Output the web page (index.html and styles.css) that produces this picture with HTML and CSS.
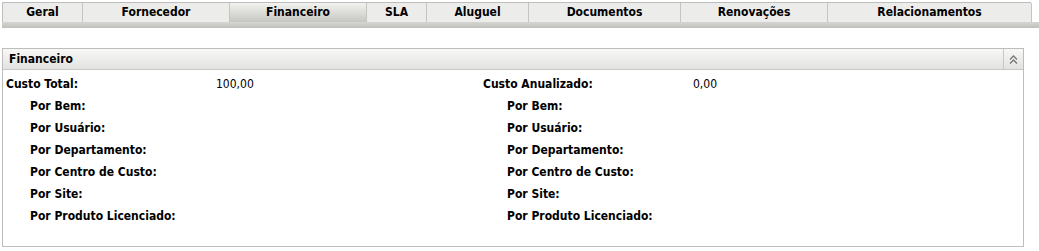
FILE: index.html
```html
<!DOCTYPE html>
<html lang="pt">
<head>
    <meta charset="UTF-8">
    <title>Financeiro</title>
    <link rel="stylesheet" href="styles.css">
</head>
<body>

<!-- Abas -->
<div class="tabs">
    <div class="tab">Geral</div>
    <div class="tab">Fornecedor</div>
    <div class="tab active">Financeiro</div>
    <div class="tab">SLA</div>
    <div class="tab">Aluguel</div>
    <div class="tab">Documentos</div>
    <div class="tab">Renovações</div>
    <div class="tab">Relacionamentos</div>
</div>
<div class="tab-band"></div>

<!-- Painel Financeiro -->
<div class="panel">
    <div class="panel-header">
        <span class="panel-title">Financeiro</span>
        <span class="collapse">
            <svg width="11" height="11" viewBox="0 0 11 11">
                <path d="M2 5.5 L5.5 2 L9 5.5 M2 9.5 L5.5 6 L9 9.5" fill="none" stroke="#777" stroke-width="1.3"/>
            </svg>
        </span>
    </div>
    <div class="panel-body">
        <div class="col">
            <div class="row"><span class="label">Custo Total:</span><span class="value">100,00</span></div>
            <div class="row sub"><span class="label">Por Bem:</span></div>
            <div class="row sub"><span class="label">Por Usuário:</span></div>
            <div class="row sub"><span class="label">Por Departamento:</span></div>
            <div class="row sub"><span class="label">Por Centro de Custo:</span></div>
            <div class="row sub"><span class="label">Por Site:</span></div>
            <div class="row sub"><span class="label">Por Produto Licenciado:</span></div>
        </div>
        <div class="col">
            <div class="row"><span class="label">Custo Anualizado:</span><span class="value">0,00</span></div>
            <div class="row sub"><span class="label">Por Bem:</span></div>
            <div class="row sub"><span class="label">Por Usuário:</span></div>
            <div class="row sub"><span class="label">Por Departamento:</span></div>
            <div class="row sub"><span class="label">Por Centro de Custo:</span></div>
            <div class="row sub"><span class="label">Por Site:</span></div>
            <div class="row sub"><span class="label">Por Produto Licenciado:</span></div>
        </div>
    </div>
</div>

</body>
</html>
```

FILE: styles.css
```css
body {
    font-family: "DejaVu Sans Condensed", "DejaVu Sans", sans-serif;
    font-stretch: condensed;
    font-size: 12px;
    color: #000;
    margin: 0;
    padding: 2px;
    background: #fff;
}

.tabs {
    display: grid;
    grid-template-columns: 80px 147px 137px 60px 102px 152px 147px 204px;
    width: 1029px;
    border-top: 1px solid #bdbdbd;
    border-left: 1px solid #bdbdbd;
    box-sizing: border-box;
}

.tab {
    height: 19px;
    line-height: 19px;
    text-align: center;
    font-weight: bold;
    background: #ececea;
    border-right: 1px solid #c4c4c4;
}

.tab.active {
    background: linear-gradient(#f2f2f0, #c6c6c2);
}

.tab-band {
    height: 6px;
    margin-right: -2px;
    background: linear-gradient(#d6d6d2, #bebeba);
}

.panel {
    margin-top: 20px;
    width: 1022px;
    height: 199px;
    box-sizing: border-box;
    border: 1px solid #bdbdbd;
}

.panel-header {
    display: flex;
    height: 20px;
    border-bottom: 1px solid #c8c8c8;
    background: linear-gradient(#f8f8f6, #e2e2e0);
}

.panel-title {
    flex: 1;
    padding-left: 6px;
    line-height: 21px;
    font-weight: bold;
}

.collapse {
    width: 19px;
    border-left: 1px solid #c8c8c8;
    display: flex;
    align-items: center;
    justify-content: center;
}

.panel-body {
    display: flex;
    padding: 3px 0 0 3px;
}

.col {
    width: 477px;
}

.row {
    display: flex;
    height: 22px;
    line-height: 22px;
}

.label {
    width: 210px;
    font-weight: bold;
}

.sub .label {
    padding-left: 24px;
}

.value {
    font-size: 12px;
}
```
